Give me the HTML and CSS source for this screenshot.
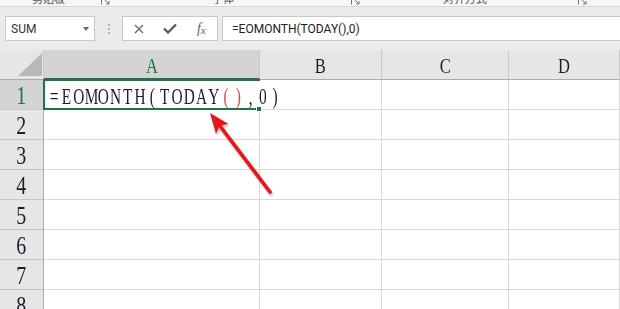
FILE: index.html
```html
<!DOCTYPE html>
<html lang="zh-CN">
<head>
    <meta charset="UTF-8">
    <meta name="viewport" content="width=device-width, initial-scale=1.0">
    <title>EOMONTH</title>
    <link rel="stylesheet" href="styles.css">
</head>
<body>
    <!-- bottom edge of the ribbon, group names cut off -->
    <div class="ribbon-edge">
        <span class="group-label g1">剪贴板</span>
        <span class="launcher k1"><svg width="10" height="14" viewBox="0 0 10 14"><path d="M1.5 4v8.5M1.5 4h7M4 7l5 5M6 12h3v-3" fill="none" stroke="#777" stroke-width="1"/></svg></span>
        <span class="group-label g2">字体</span>
        <span class="launcher k2"><svg width="10" height="14" viewBox="0 0 10 14"><path d="M1.5 4v8.5M1.5 4h7M4 7l5 5M6 12h3v-3" fill="none" stroke="#777" stroke-width="1"/></svg></span>
        <span class="group-label g3">对齐方式</span>
        <span class="launcher k3"><svg width="10" height="14" viewBox="0 0 10 14"><path d="M1.5 4v8.5M1.5 4h7M4 7l5 5M6 12h3v-3" fill="none" stroke="#777" stroke-width="1"/></svg></span>
    </div>

    <!-- formula bar -->
    <div class="formula-bar">
        <div class="name-box">SUM<span class="drop"></span></div>
        <div class="grip"></div>
        <div class="fx-buttons">
            <span class="fx-btn"><svg width="10" height="10" viewBox="0 0 10 10"><path d="M1 1L9 9M9 1L1 9" stroke="#6b6b6b" stroke-width="1.4"/></svg></span>
            <span class="fx-btn"><svg width="14" height="11" viewBox="0 0 14 11"><path d="M1 5.5L5 9.5L13 1.5" fill="none" stroke="#5e5e5e" stroke-width="2.4"/></svg></span>
            <span class="fx-btn fx-label">f<small>x</small></span>
        </div>
        <div class="formula-input">=EOMONTH(TODAY(),0)</div>
    </div>

    <!-- worksheet -->
    <div class="sheet">
        <div class="corner"></div>
        <div class="col-head active"><span class="glyph">A</span></div>
        <div class="col-head"><span class="glyph">B</span></div>
        <div class="col-head"><span class="glyph">C</span></div>
        <div class="col-head"><span class="glyph">D</span></div>

        <div class="row-head active"><span class="glyph">1</span></div>
        <div class="cell a1">
            <div class="formula"><span>=</span><span>E</span><span>O</span><span>M</span><span>O</span><span>N</span><span>T</span><span>H</span><span>(</span><span>T</span><span>O</span><span>D</span><span>A</span><span>Y</span><span class="red">(</span><span class="red">)</span><span>,</span><span>0</span><span>)</span></div>
        </div>
        <div class="cell"></div><div class="cell"></div><div class="cell"></div>

        <div class="row-head"><span class="glyph">2</span></div>
        <div class="cell"></div><div class="cell"></div><div class="cell"></div><div class="cell"></div>
        <div class="row-head"><span class="glyph">3</span></div>
        <div class="cell"></div><div class="cell"></div><div class="cell"></div><div class="cell"></div>
        <div class="row-head"><span class="glyph">4</span></div>
        <div class="cell"></div><div class="cell"></div><div class="cell"></div><div class="cell"></div>
        <div class="row-head"><span class="glyph">5</span></div>
        <div class="cell"></div><div class="cell"></div><div class="cell"></div><div class="cell"></div>
        <div class="row-head"><span class="glyph">6</span></div>
        <div class="cell"></div><div class="cell"></div><div class="cell"></div><div class="cell"></div>
        <div class="row-head"><span class="glyph">7</span></div>
        <div class="cell"></div><div class="cell"></div><div class="cell"></div><div class="cell"></div>
        <div class="row-head"><span class="glyph">8</span></div>
        <div class="cell"></div><div class="cell"></div><div class="cell"></div><div class="cell"></div>
    </div>

    <!-- red arrow pointing at TODAY() -->
    <svg class="arrow" width="620" height="309" viewBox="0 0 620 309">
        <path d="M270 192L220 126" stroke="#e8161b" stroke-width="3.6" stroke-linecap="round"/>
        <path d="M210 113L228.5 124L219.5 125.5L216 134Z" fill="#e8161b"/>
    </svg>
</body>
</html>
```

FILE: styles.css
```css
body {
    margin: 0;
    width: 620px;
    height: 309px;
    overflow: hidden;
    position: relative;
    background-color: #fff;
    font-family: Roboto, "Noto Sans CJK SC", sans-serif;
}

/* ribbon edge */
.ribbon-edge {
    height: 6px;
    display: flex;
    align-items: flex-end;
    overflow: hidden;
    background-color: #f6f6f6;
    border-bottom: 1px solid #d6d6d6;
}
.ribbon-edge > * {
    flex: none;
    height: 15px;
}
.group-label {
    font: 11px/15px "Noto Sans CJK SC", sans-serif;
    color: #555;
}
.launcher svg {
    display: block;
    margin-top: 1px;
}
.g1 { margin-left: 32px; }
.k1 { margin-left: 35px; }
.g2 { margin-left: 102px; }
.k2 { margin-left: 116px; }
.g3 { margin-left: 83px; }
.k3 { margin-left: 90px; }

/* formula bar */
.formula-bar {
    display: flex;
    height: 25px;
    padding: 9px 0;
    background-color: #ebebeb;
}
.name-box {
    margin-left: 5px;
    width: 90px;
    box-sizing: border-box;
    display: flex;
    align-items: center;
    padding-left: 5px;
    background-color: #fff;
    border: 1px solid #c8c8c8;
    font-size: 12px;
    color: #333;
}
.drop {
    margin-left: auto;
    margin-right: 5px;
    border-left: 3.5px solid transparent;
    border-right: 3.5px solid transparent;
    border-top: 4px solid #6a6a6a;
}
.grip {
    width: 27px;
    display: flex;
    align-items: center;
    justify-content: center;
}
.grip::before {
    content: "";
    height: 10px;
    border-left: 2px dotted #b3b3b3;
}
.fx-buttons {
    width: 96px;
    box-sizing: border-box;
    display: flex;
    background-color: #fff;
    border: 1px solid #c8c8c8;
}
.fx-btn {
    flex: 1;
    display: flex;
    align-items: center;
    justify-content: center;
}
.fx-label {
    font: italic 14px "Liberation Serif", serif;
    color: #5e5e5e;
}
.fx-label small {
    font-size: 11px;
    margin-top: 3px;
}
.formula-input {
    flex: 1;
    margin-left: 4px;
    display: flex;
    align-items: center;
    padding-left: 9px;
    background-color: #fff;
    border: 1px solid #c8c8c8;
    border-right: none;
    font-size: 12px;
    color: #222;
}

/* worksheet grid */
.sheet {
    display: grid;
    grid-template-columns: 44px 216px 122px 127px 1fr;
    grid-auto-rows: 30px;
}
.sheet > div {
    box-sizing: border-box;
}
.cell {
    border-right: 1px solid #dadada;
    border-bottom: 1px solid #dadada;
}
.corner {
    position: relative;
    background-color: #e6e6e6;
    border-right: 1px solid #c8c8c8;
    border-bottom: 1px solid #ababab;
}
.corner::after {
    content: "";
    position: absolute;
    right: 1px;
    bottom: 3px;
    border-left: 24px solid transparent;
    border-bottom: 23px solid #b8b8b8;
}
.col-head {
    padding-top: 2px;
    text-align: center;
    font: 22px/28px "Liberation Serif", serif;
    color: #1e1e2a;
    background-color: #e6e6e6;
    border-right: 1px solid #c8c8c8;
    border-bottom: 1px solid #ababab;
}
.row-head {
    padding-top: 2px;
    text-align: center;
    font: 25px/28px "Liberation Serif", serif;
    color: #1e1e2a;
    background-color: #e6e6e6;
    border-right: 1px solid #ababab;
    border-bottom: 1px solid #c6c6c6;
}
.col-head .glyph {
    display: inline-block;
    transform: scaleX(.75);
}
.row-head .glyph {
    display: inline-block;
    transform: scaleX(.8);
}
.col-head.active,
.row-head.active {
    background-color: #d4d4d4;
    color: #217346;
}
.col-head.active {
    border-bottom: 2px solid #217346;
}

/* selected cell with overflowing formula */
.a1 {
    position: relative;
    padding-left: 4px;
    border-right-color: #fff;
}
.a1::before {
    content: "";
    position: absolute;
    left: -1px;
    top: -1px;
    right: -1px;
    bottom: -1px;
    border: 2px solid #217346;
    border-right: none;
}
.a1::after {
    content: "";
    position: absolute;
    right: -3px;
    bottom: -3px;
    width: 4px;
    height: 4px;
    background-color: #217346;
    border: 1px solid #fff;
}
.formula {
    display: flex;
    white-space: nowrap;
    padding-top: 1px;
    transform: scaleX(.64);
    transform-origin: 0 0;
    font: 24px/30px "Liberation Serif", serif;
    color: #1b1b33;
}
.formula span {
    flex: none;
    width: 19.2px;
    text-align: center;
}
.formula .red {
    color: #e04848;
}

.arrow {
    position: absolute;
    left: 0;
    top: 0;
    pointer-events: none;
    filter: drop-shadow(1px 2px 1px rgba(0, 0, 0, .3));
}
```
